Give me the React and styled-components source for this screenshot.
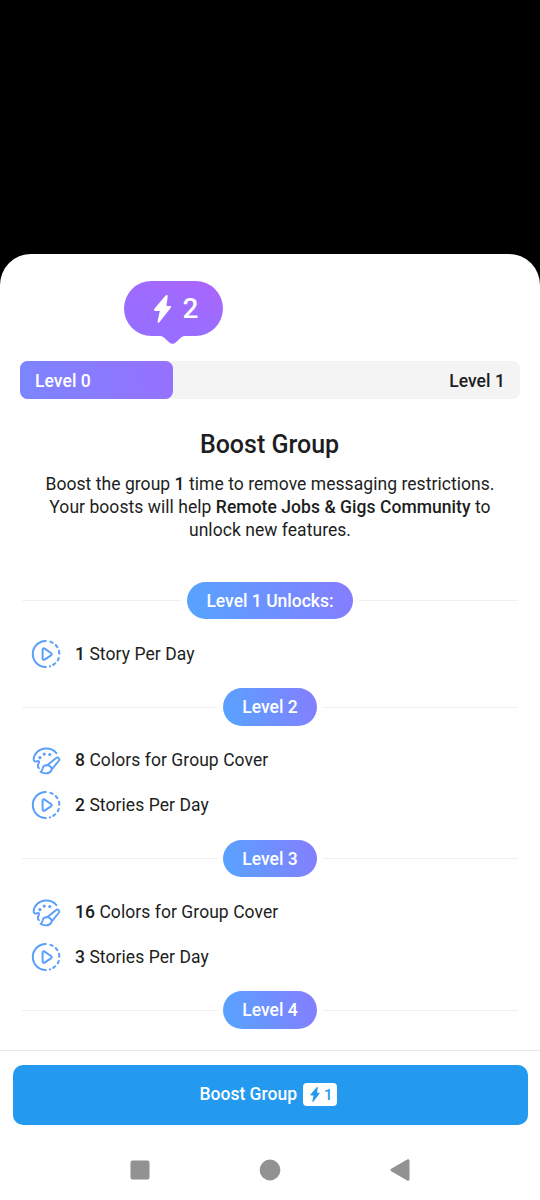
import React from 'react';
import styled, { createGlobalStyle } from 'styled-components';

const GlobalStyle = createGlobalStyle`
  * {
    box-sizing: border-box;
  }

  body {
    margin: 0;
    background: #000000;
    font-family: Roboto, sans-serif;
    color: #1c1e21;
  }
`;

const Screen = styled.div`
  display: flex;
  flex-direction: column;
  height: 1200px;
  padding-top: 253.5px;
  background: #000000;
  overflow: hidden;
`;

const Sheet = styled.main`
  flex: 1;
  min-height: 0;
  display: flex;
  flex-direction: column;
  background: #ffffff;
  border-radius: 31px 31px 0 0;
`;

const Content = styled.div`
  flex: 1;
  min-height: 0;
  overflow: hidden;
  padding: 27.5px 20px 0;
`;

const Bubble = styled.div`
  position: relative;
  display: flex;
  align-items: center;
  gap: 10.5px;
  width: 99px;
  height: 55px;
  margin-left: 103.5px;
  padding-left: 29.5px;
  border-radius: 28px;
  background: linear-gradient(20deg, #966eff 10%, #9c6cff 50%, #ac64fb 100%);
  color: #ffffff;
  font-size: 28px;
  font-weight: 500;
`;

const Tail = styled.svg`
  position: absolute;
  left: 36.5px;
  top: 54px;
`;

const Progress = styled.div`
  display: flex;
  justify-content: space-between;
  height: 37.5px;
  margin-top: 25px;
  border-radius: 7.5px;
  background: #f4f4f4;
  font-size: 17.5px;
  font-weight: 500;
  line-height: 40px;
  letter-spacing: 0.06px;
`;

const ProgressFill = styled.div`
  width: 153px;
  padding-left: 15px;
  border-radius: 7.5px;
  background: linear-gradient(75deg, #7b86ff, #9770ff);
  color: #ffffff;
`;

const ProgressEnd = styled.div`
  padding-right: 15px;
`;

const Title = styled.h1`
  margin: 30.5px 1px 0 0;
  font-size: 25px;
  font-weight: 500;
  line-height: 32px;
  text-align: center;
`;

const Description = styled.p`
  margin: 12px 0 0;
  font-size: 17.5px;
  line-height: 22.8px;
  letter-spacing: 0.05px;
  text-align: center;
  white-space: nowrap;

  & b {
    font-weight: 500;
  }
`;

const LevelHeader = styled.div`
  display: flex;
  align-items: center;
  gap: 6px;
  height: 37.5px;
  margin: 12px 2px;

  &::before,
  &::after {
    content: '';
    flex: 1;
    height: 1px;
    background: #f0f0f0;
  }
`;

const LevelPill = styled.div`
  height: 37.5px;
  padding: 0 19px;
  border-radius: 19px;
  background: linear-gradient(75deg, #56a4ff, #867dff);
  color: #ffffff;
  font-size: 17.5px;
  font-weight: 500;
  line-height: 38.2px;
`;

const Levels = styled.section`
  margin-top: 40.6px;
`;

const PerkRow = styled.div`
  display: flex;
  align-items: center;
  gap: 13.5px;
  height: 45px;
  padding-left: 10.5px;
  font-size: 17.5px;
  letter-spacing: 0.06px;

  & b {
    font-weight: 500;
  }
`;

const Footer = styled.footer`
  height: 90px;
  padding: 14px 12.5px;
  border-top: 1px solid #e8e8e8;
`;

const BoostButton = styled.button`
  display: flex;
  align-items: center;
  justify-content: center;
  gap: 6.5px;
  width: 100%;
  height: 60px;
  padding: 0 3px 1px 0;
  border: none;
  border-radius: 10px;
  background: #2399ef;
  color: #ffffff;
  font-family: inherit;
  font-size: 17.5px;
  font-weight: 500;
`;

const ButtonLabel = styled.span`
  padding-bottom: 1.5px;
`;

const BoostCount = styled.span`
  display: flex;
  align-items: center;
  gap: 4px;
  width: 34px;
  height: 23px;
  padding-left: 6.5px;
  border-radius: 4px;
  background: #ffffff;
  color: #2399ef;
  font-size: 15px;
`;

const SystemNav = styled.nav`
  display: flex;
  align-items: center;
  justify-content: center;
  gap: 110px;
  height: 60px;
`;

const Bolt = ({ width, height }) => (
  <svg width={width} height={height} viewBox="0 0 18 28" fill="currentColor">
    <path d="M12.1.5.7 14.1c-.7.9-.3 1.8.8 1.8h4.8L4.1 26.2c-.2 1.5 1.1 2 2 .9L17.3 12.7c.7-.9.3-1.8-.8-1.8h-3.6L14.2 1.4C14.4 0 13-.6 12.1.5Z" />
  </svg>
);

const StoryIcon = () => (
  <svg width="31" height="32" viewBox="0 0 31 32" fill="none" stroke="#5a9ffa" strokeWidth="2" strokeLinecap="round" strokeLinejoin="round">
    <path d="M14.8 3A13 13 0 1 0 14.8 29" />
    <path d="M19.3 3.7 21.7 4.8M24.7 7 26.4 9.1M28 12.8 28.3 15.7M27.8 20 26.8 22.3M24.2 25.3 22.2 26.9M19.2 28.3 18.8 28.4" />
    <path d="M11.6 11.8v8.6c0 1.3.9 1.8 2 1.2l6.4-4.3c1-.7 1-1.6 0-2.3l-6.4-4.4c-1.1-.7-2-.2-2 1.2Z" />
  </svg>
);

const PaletteIcon = () => (
  <svg width="31" height="32" viewBox="0 -1 31 32" fill="none" stroke="#5a9ffa" strokeWidth="1.9" strokeLinecap="round" strokeLinejoin="round">
    <path d="M25.4 8.2C22.7 4.9 18.9 3.3 14.8 3.5 8.2 3.7 3 8.4 2.6 14.4c-.1 2 1.8 2.7 3.4 1.8 1.5-.8 2.7.3 1.8 1.7-1.2 1.8-1.5 3.5.1 5.3" />
    <path d="m16.1 20.3 9.1-7.3c1.7-1.2 3.9.7 2.8 2.5l-7.4 9.2M16.1 20.3c-2.6-.4-4.3 1-4.6 3.5-.2 1.5-.6 2.3-2 3 3.9 2.5 10.2 2 11.1-2.1.4-2.2-1.7-4.3-4.5-4.4Z" />
    <g fill="#5a9ffa" stroke="none">
      <circle cx="8.9" cy="12.7" r="1.6" />
      <circle cx="13.2" cy="9.1" r="1.6" />
      <circle cx="18.8" cy="9.5" r="1.6" />
    </g>
  </svg>
);

const levels = [
  { label: 'Level 1 Unlocks:', perks: [{ count: 1, text: 'Story Per Day' }] },
  {
    label: 'Level 2',
    perks: [
      { count: 8, text: 'Colors for Group Cover', cover: true },
      { count: 2, text: 'Stories Per Day' },
    ],
  },
  {
    label: 'Level 3',
    perks: [
      { count: 16, text: 'Colors for Group Cover', cover: true },
      { count: 3, text: 'Stories Per Day' },
    ],
  },
  { label: 'Level 4', perks: [] },
];

const App = () => {
  return (
    <>
      <GlobalStyle />
      <Screen>
        <Sheet>
          <Content>
            <Bubble>
              <Bolt width={19} height={28} />
              <span>2</span>
              <Tail width="25" height="9" viewBox="0 0 25 9" fill="#996dff">
                <path d="M0 0h25v1c-2 0-3.2.8-4.5 2l-4.6 4.2c-2.2 2-4.6 2-6.8 0L4.5 3C3.2 1.8 2 1 0 1Z" />
              </Tail>
            </Bubble>
            <Progress>
              <ProgressFill>Level 0</ProgressFill>
              <ProgressEnd>Level 1</ProgressEnd>
            </Progress>
            <Title>Boost Group</Title>
            <Description>
              Boost the group <b>1</b> time to remove messaging restrictions.
              <br />
              Your boosts will help <b>Remote Jobs &amp; Gigs Community</b> to
              <br />
              unlock new features.
            </Description>
            <Levels>
              {levels.map(({ label, perks }) => (
                <React.Fragment key={label}>
                  <LevelHeader>
                    <LevelPill>{label}</LevelPill>
                  </LevelHeader>
                  {perks.map(({ count, text, cover }) => (
                    <PerkRow key={text}>
                      {cover ? <PaletteIcon /> : <StoryIcon />}
                      <span>
                        <b>{count}</b> {text}
                      </span>
                    </PerkRow>
                  ))}
                </React.Fragment>
              ))}
            </Levels>
          </Content>
          <Footer>
            <BoostButton>
              <ButtonLabel>Boost Group</ButtonLabel>
              <BoostCount>
                <Bolt width={10} height={15} />
                1
              </BoostCount>
            </BoostButton>
          </Footer>
          <SystemNav>
            <svg width="20" height="20" fill="#929292">
              <rect x="0.5" y="0.5" width="19" height="19" rx="2" />
            </svg>
            <svg width="20" height="22" viewBox="0 0 20 22" overflow="visible" fill="#929292">
              <circle cx="10" cy="11" r="10.4" />
            </svg>
            <svg width="20" height="22" viewBox="0 0 20 22" fill="#929292">
              <path d="M1.2 9.7 17.2.5c1-.6 2.3 0 2.3 1.3v18.4c0 1.3-1.3 1.9-2.3 1.3l-16-9.2c-1-.7-1-1.9 0-2.6Z" />
            </svg>
          </SystemNav>
        </Sheet>
      </Screen>
    </>
  );
};

export default App;
